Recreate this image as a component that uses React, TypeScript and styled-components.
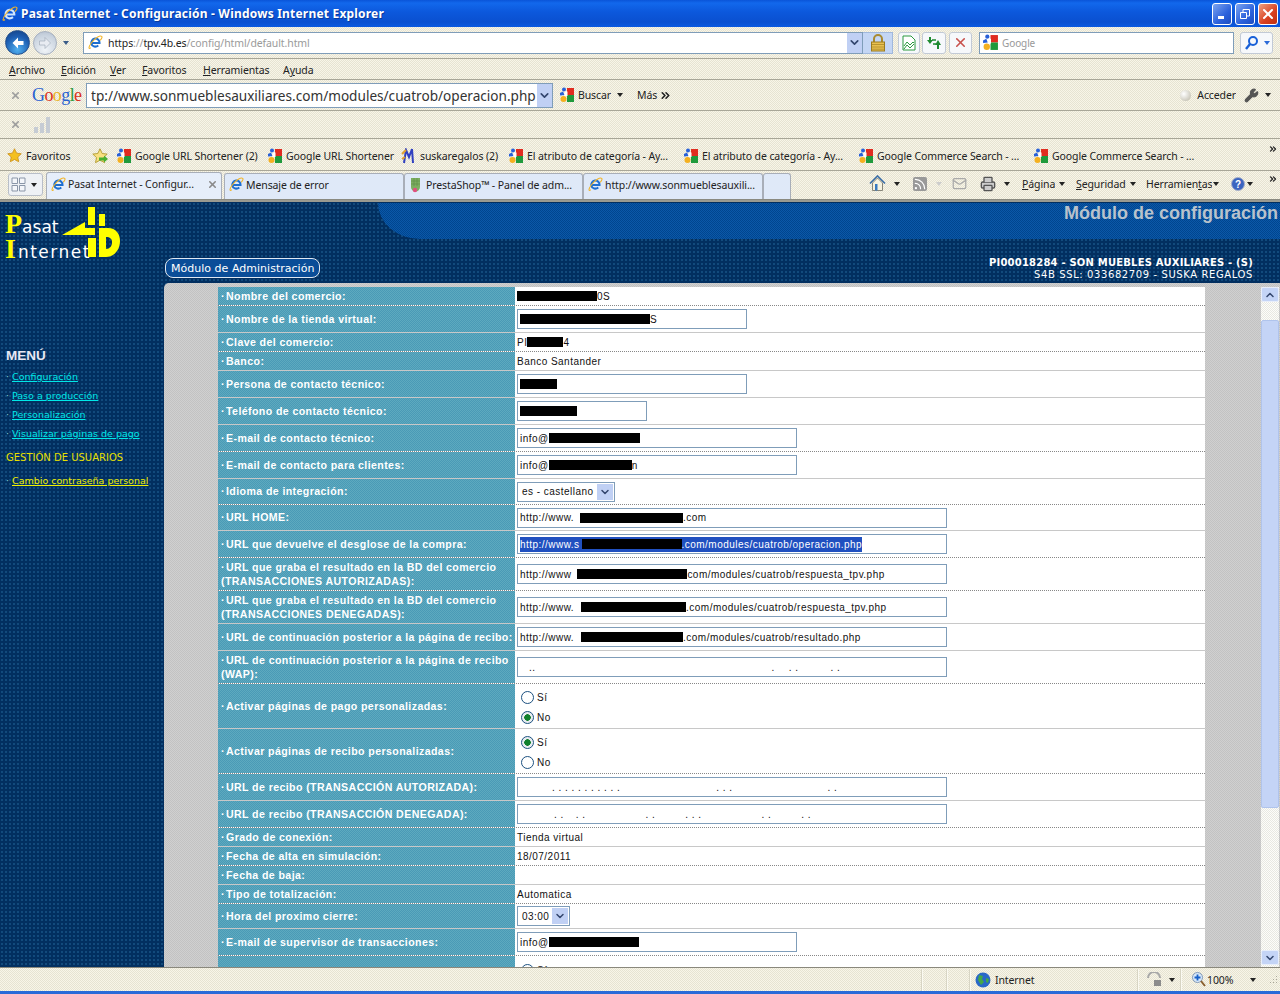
import React from "react";
import styled, { createGlobalStyle, css } from "styled-components";
import { ChevronDown, ChevronUp, ChevronsRight, Mail, Printer, Rss, Wrench, X } from "lucide-react";

const GlobalStyle = createGlobalStyle`
  html, body { margin: 0; padding: 0; background: #ece9d8; overflow: hidden; }
  * { box-sizing: border-box; }
`;

const checker = (a: string, b: string) => css`
  background-color: ${a};
  background-image: repeating-conic-gradient(${a} 0 25%, ${b} 0 50%);
  background-size: 2px 2px;
`;

const dots = (bg: string, dot: string) => css`
  background-color: ${bg};
  background-image: radial-gradient(${dot} 0.8px, transparent 1px);
  background-size: 4px 4px;
`;

const uiFont = `"Noto Sans", "Open Sans", sans-serif`;

const Window = styled.div`
  width: 1280px;
  height: 994px;
  display: flex;
  flex-direction: column;
  overflow: hidden;
  font-family: ${uiFont};
  font-size: 10.5px;
  letter-spacing: -0.1px;
  color: #222;
`;

/* ---- title bar ---- */
const TitleBar = styled.div`
  height: 27px;
  flex: none;
  display: flex;
  align-items: center;
  padding: 0 2px;
  background: linear-gradient(#0a54d8 0, #1268ec 3px, #0c58dc 12px, #0a50d0 22px, #0c5ae0 27px);
  color: #fff;
`;

const TitleText = styled.div`
  margin-left: 3px;
  font: bold 12px "Noto Sans", sans-serif;
  letter-spacing: 0.2px;
  flex: 1;
  text-shadow: 1px 1px 0 #083a9c;
`;

const WinButton = styled.div<{ $close?: boolean }>`
  width: 20px;
  height: 22px;
  margin-left: 3px;
  border: 1px solid #fff;
  border-radius: 3px;
  display: flex;
  align-items: center;
  justify-content: center;
  color: #fff;
  background: ${(p) =>
    p.$close
      ? "linear-gradient(135deg, #f0a080, #d84020 60%, #c03010)"
      : "linear-gradient(135deg, #7ca4f0, #2c62dc 60%, #1c4cc0)"};
`;

/* ---- generic bars ---- */
const Bar = styled.div<{ $h: number; $line?: boolean }>`
  height: ${(p) => p.$h}px;
  flex: none;
  display: flex;
  align-items: center;
  ${checker("#f8f5e8", "#e6e3d2")}
  border-bottom: ${(p) => (p.$line === false ? "none" : "1px solid #a8a698")};
`;

const FavBar = styled(Bar)`
  padding-top: 2px;
`;

const MenuBar = styled(Bar)`
  padding-top: 2px;
`;

const Spacer = styled.div`
  flex: 1;
`;

const Slot = styled.div<{ $w?: number; $ml?: number; $gap?: number }>`
  flex: none;
  display: flex;
  align-items: center;
  white-space: nowrap;
  overflow: hidden;
  ${(p) => p.$w !== undefined && `width: ${p.$w}px;`}
  margin-left: ${(p) => p.$ml ?? 0}px;
  gap: ${(p) => p.$gap ?? 3}px;
`;

const Ul = styled.span`
  text-decoration: underline;
`;

const Caret = styled.span<{ $ml?: number; $color?: string }>`
  flex: none;
  width: 0;
  height: 0;
  margin-left: ${(p) => p.$ml ?? 0}px;
  border: 3px solid transparent;
  border-top: 4px solid ${(p) => p.$color ?? "#222"};
  border-bottom: 0;
`;

const Dropper = styled.div<{ $w?: number; $h?: number }>`
  width: ${(p) => p.$w ?? 15}px;
  height: ${(p) => p.$h ?? 20}px;
  flex: none;
  display: flex;
  align-items: center;
  justify-content: center;
  color: #33466e;
  background: #c0d0f4;
`;

/* ---- address bar ---- */
const NavPill = styled.div`
  margin-left: 5px;
  width: 54px;
  height: 26px;
  display: flex;
  align-items: center;
`;

const RoundBtn = styled.div<{ $active?: boolean }>`
  width: ${(p) => (p.$active ? 25 : 24)}px;
  height: ${(p) => (p.$active ? 25 : 24)}px;
  border-radius: 50%;
  flex: none;
  margin-right: ${(p) => (p.$active ? 3 : 0)}px;
  display: flex;
  align-items: center;
  justify-content: center;
  border: 1px solid ${(p) => (p.$active ? "#24508c" : "#a6b0c0")};
  background: ${(p) =>
    p.$active
      ? "radial-gradient(circle at 50% 80%, #50b0f0, #1c5cb0 60%, #123e80)"
      : "radial-gradient(circle at 50% 80%, #f0f4f8, #c8d2de 70%, #b0bccc)"};
`;

const FieldBox = styled.div<{ $w: number; $h?: number; $ml?: number }>`
  width: ${(p) => p.$w}px;
  height: ${(p) => p.$h ?? 22}px;
  margin-left: ${(p) => p.$ml ?? 0}px;
  flex: none;
  display: flex;
  align-items: center;
  background: #fff;
  border: 1px solid #7f9db9;
  white-space: nowrap;
  overflow: hidden;
`;

const AddressText = styled.div`
  margin-left: 5px;
  flex: 1;
  font-size: 10.5px;
  color: #9a9a9a;
  & b {
    font-weight: 400;
    color: #222;
  }
`;

const LockBox = styled.div`
  width: 30px;
  height: 22px;
  flex: none;
  background: #c4d6f4;
  border: 1px solid #a0b8dc;
  border-left: none;
  display: flex;
  align-items: center;
  justify-content: center;
`;

const SquareBtn = styled.div<{ $w?: number; $ml?: number }>`
  width: ${(p) => p.$w ?? 23}px;
  height: 22px;
  flex: none;
  margin-left: ${(p) => p.$ml ?? 3}px;
  border: 1px solid #c2cad6;
  border-radius: 3px;
  background: #f6f8fb;
  display: flex;
  align-items: center;
  justify-content: center;
`;

const Placeholder = styled.span`
  margin-left: 3px;
  color: #999;
  font-size: 10px;
`;

/* ---- menu ---- */
const MenuItem = styled.span<{ $w: number; $ml?: number }>`
  flex: none;
  width: ${(p) => p.$w}px;
  margin-left: ${(p) => p.$ml ?? 0}px;
`;

/* ---- google bar ---- */
const CloseMark = styled.span<{ $ml?: number }>`
  margin-left: ${(p) => p.$ml ?? 10}px;
  flex: none;
  color: #9a9a9a;
  display: flex;
`;

const GoogleWord = styled.div`
  margin-left: 11px;
  width: 48px;
  flex: none;
  font: 18px "Liberation Serif", serif;
  letter-spacing: -0.6px;
`;

const GL = styled.span<{ $c: string }>`
  color: ${(p) => p.$c};
`;

const ComboText = styled.div`
  flex: 1;
  margin-left: 4px;
  font-size: 13.6px;
  letter-spacing: 0;
  color: #333;
  overflow: hidden;
`;

const Orb = styled.span`
  width: 11px;
  height: 11px;
  border-radius: 50%;
  background: radial-gradient(circle at 35% 35%, #fff, #b8b4a4);
  flex: none;
`;

const SmallBars = styled.div`
  margin-left: 13px;
  display: flex;
  align-items: flex-end;
  gap: 2px;
  height: 17px;
`;

const SmallBar = styled.span<{ $h: number }>`
  width: 4px;
  height: ${(p) => p.$h}px;
  background: #c6ccd4;
`;

/* ---- tabs ---- */
const TabRow = styled(Bar)`
  align-items: flex-end;
  border-bottom: 1px solid #8a8a80;
`;

const Tab = styled.div<{ $w: number; $active?: boolean; $ml?: number }>`
  flex: none;
  width: ${(p) => p.$w}px;
  height: ${(p) => (p.$active ? 27 : 26)}px;
  margin-left: ${(p) => p.$ml ?? 0}px;
  padding: 0 3px 4px 4px;
  display: flex;
  align-items: center;
  gap: 2px;
  white-space: nowrap;
  overflow: hidden;
  border: 1px solid #a8aeb8;
  border-bottom: none;
  border-radius: 3px 3px 0 0;
  background: ${(p) => (p.$active ? "#e6eefa" : "#dfe9f8")};
`;

const TabSwitch = styled.div`
  margin: 0 0 3px 8px;
  width: 35px;
  height: 23px;
  flex: none;
  border: 1px solid #b8bec8;
  border-radius: 3px;
  background: #eef1f5;
  display: flex;
  align-items: center;
  gap: 4px;
  padding-left: 2px;
`;

const TabTools = styled.div`
  flex: 1;
  height: 100%;
  display: flex;
  align-items: center;
  padding: 0 0 3px 0;
`;

/* ---- page ---- */
const Page = styled.div`
  flex: 1;
  min-height: 0;
  display: flex;
  flex-direction: column;
  letter-spacing: 0;
  border-top: 2px solid #9a9a90;
  ${dots("#022f60", "#124a7c")}
`;

const Header = styled.div`
  height: 81px;
  flex: none;
  display: flex;
`;

const Logo = styled.div`
  width: 164px;
  flex: none;
  display: flex;
  padding: 5px 0 0 5px;
`;

const LogoText = styled.div`
  width: 57px;
  padding-top: 7px;
  color: #fff;
  white-space: nowrap;
`;

const LogoLine = styled.div<{ $ls: number }>`
  font: 17px/24px "DejaVu Sans", sans-serif;
  letter-spacing: ${(p) => p.$ls}px;
`;

const LogoCap = styled.span<{ $mr: number }>`
  font-family: "Liberation Serif", serif;
  font-weight: bold;
  font-size: 28px;
  line-height: 20px;
  letter-spacing: 0;
  margin-right: ${(p) => p.$mr}px;
  color: #ffff00;
`;

const HeadRight = styled.div`
  flex: 1;
  display: flex;
  flex-direction: column;
`;

const Band = styled.div`
  height: 36px;
  margin: 1px 0 0 214px;
  padding-right: 2px;
  border-bottom-left-radius: 42px 36px;
  display: flex;
  justify-content: flex-end;
  ${checker("#00458f", "#0b58a8")}
  font: bold 18px "Liberation Sans", Arial, sans-serif;
  color: #b8c2cc;
`;

const InfoRow = styled.div`
  flex: 1;
  display: flex;
  justify-content: space-between;
  align-items: flex-end;
  padding: 0 27px 2px 1px;
`;

const ModuleBadge = styled.div`
  height: 20px;
  margin-bottom: 3px;
  padding: 0 5px;
  border: 1px solid #dfe8f2;
  border-radius: 8px;
  display: flex;
  align-items: center;
  background: #0a4d98;
  color: #fff;
  font: 11px "DejaVu Sans", sans-serif;
  letter-spacing: 0.02px;
`;

const Merchant = styled.div`
  text-align: right;
  color: #fff;
  font: 10px/12px "DejaVu Sans", sans-serif;
  letter-spacing: 0.6px;
  & b {
    display: block;
    font-size: 10px;
    letter-spacing: 0.2px;
  }
`;

const Lower = styled.div`
  flex: 1;
  min-height: 0;
  display: flex;
`;

const Sidebar = styled.div`
  width: 164px;
  flex: none;
  padding: 64px 0 0 6px;
  font: 9.5px "DejaVu Sans", sans-serif;
`;

const MenuTitle = styled.div`
  font: bold 13.5px/18px "Liberation Sans", sans-serif;
  color: #e8e8f4;
  margin-bottom: 2px;
`;

const SideLink = styled.a<{ $yellow?: boolean }>`
  display: block;
  height: 19px;
  line-height: 19px;
  white-space: nowrap;
  color: ${(p) => (p.$yellow ? "#f0f000" : "#00e8e8")};
  &::before {
    content: "· ";
    display: inline-block;
    width: 6px;
    text-decoration: none;
    color: #8fd0d0;
  }
  & span {
    text-decoration: underline;
  }
`;

const SideHead = styled.div`
  height: 27px;
  line-height: 27px;
  font-size: 10px;
  color: #e8e000;
  margin-top: 1px;
`;

const Content = styled.div`
  flex: 1;
  min-width: 0;
  display: flex;
  padding: 4px 1px 0 0;
  border-top-left-radius: 5px;
  overflow: hidden;
  ${checker("#c2c2c2", "#d0d0d0")}
`;

const FormTable = styled.div`
  margin-left: 54px;
  width: 987px;
  flex: none;
  display: flex;
  flex-direction: column;
  background: #fff;
`;

const Row = styled.div<{ $h: number; $dotted?: boolean }>`
  height: ${(p) => p.$h}px;
  flex: none;
  display: grid;
  grid-template-columns: 297px 1fr;
  border-bottom: 1px ${(p) => (p.$dotted ? "dotted #888" : "solid #c8c8c8")};
`;

const Label = styled.div`
  display: flex;
  align-items: center;
  padding: 1px 0 0 3px;
  ${checker("#4a9ab6", "#5eaabf")}
  color: #fff;
  font: bold 10.6px/13.5px "Liberation Sans", Arial, sans-serif;
  letter-spacing: 0.4px;
  & > span::before {
    content: "·";
    display: inline-block;
    width: 5px;
    letter-spacing: 0;
  }
`;

const Value = styled.div`
  display: flex;
  align-items: center;
  padding: 0 0 0 2px;
  font: 10px "Liberation Sans", Arial, sans-serif;
  letter-spacing: 0.47px;
  color: #111;
  white-space: nowrap;
`;

const Field = styled.div<{ $w: number }>`
  width: ${(p) => p.$w}px;
  height: 20px;
  padding: 0 2px;
  display: flex;
  align-items: center;
  border: 1px solid #7f9db9;
  background: #fff;
  overflow: hidden;
  white-space: nowrap;
`;

const Selected = styled.span`
  display: inline-flex;
  align-items: center;
  height: 15px;
  background: #2050c0;
  color: #fff;
`;

const Black = styled.span<{ $w: number }>`
  display: inline-block;
  flex: none;
  width: ${(p) => p.$w}px;
  height: 10px;
  background: #000;
`;

const Gap = styled.span<{ $w: number }>`
  flex: none;
  width: ${(p) => p.$w}px;
`;

const Select = styled.div`
  height: 20px;
  padding: 0 1px 0 4px;
  display: flex;
  align-items: center;
  gap: 3px;
  border: 1px solid #7f9db9;
  background: #fff;
`;

const RadioGroup = styled.div`
  display: flex;
  flex-direction: column;
  gap: 7px;
  padding: 3px 0 0 4px;
`;

const RadioRow = styled.div`
  display: flex;
  align-items: center;
  gap: 3px;
  height: 13px;
`;

const Radio = styled.span<{ $on?: boolean }>`
  width: 13px;
  height: 13px;
  flex: none;
  border-radius: 50%;
  border: 1px solid #1c5180;
  background: ${(p) =>
    p.$on ? "radial-gradient(circle, #10802c 0 3px, #e8ecf0 3.5px)" : "#fff"};
`;

const Scrollbar = styled.div`
  margin-left: 56px;
  width: 18px;
  flex: none;
  display: flex;
  flex-direction: column;
  padding-bottom: 2px;
  ${checker("#fdfdfa", "#e8e8e2")}
`;

const ScrollBtn = styled.div`
  height: 15px;
  flex: none;
  color: #33466e;
  background: #c4d4f6;
  border: 1px solid #e8eefa;
  border-radius: 2px;
  display: flex;
  align-items: center;
  justify-content: center;
`;

const ScrollThumb = styled.div`
  margin-top: 18px;
  height: 488px;
  flex: none;
  background: #c4d4f6;
  border: 1px solid #b0c4ec;
  border-radius: 2px;
`;

/* ---- status ---- */
const Status = styled(Bar)`
  border-top: 1px solid #8a887c;
  border-bottom: none;
`;

const Sep = styled.span<{ $ml: number }>`
  flex: none;
  width: 2px;
  height: 22px;
  margin-left: ${(p) => p.$ml}px;
  background: #fbfaf2;
  border-left: 1px solid #d8d5c4;
`;

const BottomEdge = styled.div`
  height: 3px;
  flex: none;
  background: #2a6ad8;
`;

/* ---- drawn icons ---- */
const IeIcon = ({ size = 15, light }: { size?: number; light?: boolean }) => (
  <svg width={size} height={size} viewBox="0 0 16 16" style={{ flex: "none" }}>
    <path d="M4 8.500h8.300A4.400 4.400 0 103.700 9.500c.7 2.900 4.600 3.800 7.300 1.700" fill="none" stroke={light ? "#cfe4ff" : "#1e6fd0"} strokeWidth="2.200" />
    <path d="M3 13.500C.6 15.600 0 13.500 3.500 8.500 7.500 3 13 .2 14.600 1.400c1 .8-.2 2.800-1.600 4.300" fill="none" stroke="#f0b428" strokeWidth="1.100" />
  </svg>
);

const GoogleTile = ({ size = 16 }: { size?: number }) => (
  <svg width={size} height={size} viewBox="0 0 16 16" style={{ flex: "none" }}>
    <rect x="8" y="1" width="7" height="7" fill="#e02c20" />
    <rect x="8" y="8" width="7" height="7" fill="#1f9a3c" />
    <circle cx="4.500" cy="12" r="3" fill="#f4b020" />
    <circle cx="5" cy="2.500" r="2" fill="#2860d8" />
    <path d="M1 6l3-1.500L5.500 8 1 8.500z" fill="#2860d8" />
    <path d="M5.500 4.500h3V9h-3z" fill="#fff" />
  </svg>
);

const StarIcon = () => (
  <svg width={15} height={15} viewBox="0 0 16 16" style={{ flex: "none" }}>
    <path d="M8 .8l2.200 4.700 5 .6-3.700 3.500 1 5.100L8 12.200l-4.500 2.500 1-5.100L.8 6.100l5-.6z" fill="#f4c020" stroke="#c88a10" strokeWidth=".8" />
  </svg>
);

const StarAddIcon = () => (
  <svg width={17} height={16} viewBox="0 0 17 16" style={{ flex: "none" }}>
    <path d="M8 .8l2.200 4.700 5 .6-3.700 3.500 1 5.100L8 12.200l-4.500 2.500 1-5.100L.8 6.100l5-.6z" fill="#f8e080" stroke="#a89020" strokeWidth=".8" />
    <path d="M7 9.500h5V7.500l4 3.500-4 3.500v-2H7z" fill="#48b030" />
  </svg>
);

const BackArrow = ({ color }: { color: string }) => (
  <svg width={14} height={14} viewBox="0 0 14 14">
    <path d="M7 1.500L1.500 7 7 12.500V9h5.500V5H7z" fill={color} />
  </svg>
);

const PadLock = () => (
  <svg width={16} height={18} viewBox="0 0 16 18">
    <path d="M4 8V5a4 4 0 018 0v3" fill="none" stroke="#a88a30" strokeWidth="2" />
    <rect x="1.500" y="8" width="13" height="9" fill="#e8c050" stroke="#9a7a20" />
    <path d="M2 10.500h12M2 13h12M2 15.200h12" stroke="#b89430" />
  </svg>
);

const CompatIcon = () => (
  <svg width={14} height={16} viewBox="0 0 14 16">
    <path d="M1 1h8l4 4v10H1z" fill="#fff" stroke="#2c9a40" />
    <path d="M2 11l3-4 3 3 3-3 1 1M2 14l3-4 3 3 4-4" fill="none" stroke="#2c9a40" />
  </svg>
);

const RefreshIcon = () => (
  <svg width={16} height={15} viewBox="0 0 16 15">
    <path d="M1 5l3-4 3 4H5v3H3V5z" fill="#1e8a30" transform="rotate(180 4 5)" />
    <path d="M9 10l3-5 3 5h-2v4h-2v-4z" fill="#1e8a30" />
    <path d="M6 5h4M7 9h3" stroke="#1e8a30" strokeWidth="1.500" />
  </svg>
);

const SearchIcon = () => (
  <svg width={15} height={16} viewBox="0 0 15 16">
    <circle cx="9" cy="6" r="4" fill="none" stroke="#1860d8" strokeWidth="2" />
    <path d="M6 9l-4 5" stroke="#1860d8" strokeWidth="2.400" />
  </svg>
);

const HomeIcon = () => (
  <svg width={17} height={17} viewBox="0 0 17 17">
    <path d="M1 8.500L8.500 1 16 8.500" fill="none" stroke="#3a6ea8" strokeWidth="1.600" />
    <path d="M3.500 8L8.500 3l5 5v7.500h-10z" fill="#f6f2e0" stroke="#6a6a60" strokeWidth=".8" />
    <rect x="6" y="9" width="2.500" height="6.500" fill="#3a7ac0" />
  </svg>
);

const HelpIcon = () => (
  <svg width={14} height={14} viewBox="0 0 14 14">
    <circle cx="7" cy="7" r="6.500" fill="#3a64c0" stroke="#a8b0c8" />
    <text x="7" y="11" textAnchor="middle" fontSize="10" fontWeight="bold" fill="#fff" fontFamily="Liberation Sans, sans-serif">?</text>
  </svg>
);

const PrestaIcon = () => (
  <svg width={13} height={16} viewBox="0 0 13 16" style={{ flex: "none" }}>
    <path d="M2 1h9v9a4.500 4.500 0 01-9 0z" fill="#7cae60" />
    <path d="M2 4h9M2 7h9M5 1v8M8 1v8" stroke="#5a8a48" strokeWidth=".6" />
    <circle cx="6" cy="13" r="2.200" fill="#e05080" />
  </svg>
);

const SusIcon = () => (
  <svg width={16} height={16} viewBox="0 0 16 16" style={{ flex: "none" }}>
    <path d="M3 15L5 2l3 7 3-8 1 14" fill="none" stroke="#3040c0" strokeWidth="2" />
    <path d="M1 6l4-4M1 11l3-2" stroke="#e0a030" strokeWidth="2" />
  </svg>
);

const GlobeIcon = () => (
  <svg width={16} height={16} viewBox="0 0 16 16">
    <circle cx="8" cy="8" r="7.500" fill="#2a68c8" />
    <path d="M4 3l4 1-1 3 2 3-3 3-3-5zM11 6l3 1-1 4-2-1z" fill="#44a848" />
  </svg>
);

const ShieldLock = () => (
  <svg width={15} height={15} viewBox="0 0 15 15">
    <path d="M1 6a6 6 0 0112 0" fill="none" stroke="#a8a8a8" strokeWidth="2" />
    <rect x="7" y="8" width="7" height="6" fill="#8c8c8c" />
  </svg>
);

const ZoomIcon = () => (
  <svg width={14} height={15} viewBox="0 0 14 15">
    <circle cx="5.500" cy="5.500" r="5" fill="#d8e8f8" stroke="#8098b8" />
    <path d="M5.500 2.500v6M2.500 5.500h6" stroke="#1860c8" strokeWidth="1.800" />
    <path d="M9 9l4 5" stroke="#8a6030" strokeWidth="2" />
  </svg>
);

const Grip = () => (
  <svg width={10} height={10} viewBox="0 0 10 10">
    <path d="M8 1h1v1H8zM5 4h1v1H5zM8 4h1v1H8zM2 7h1v1H2zM5 7h1v1H5zM8 7h1v1H8z" fill="#a8a698" />
  </svg>
);

const PasatMark = () => (
  <svg width={60} height={52} viewBox="0 0 60 52" style={{ flex: "none", overflow: "visible" }}>
    <path d="M0 28L23 15v6h10v7z" fill="#ffff00" />
    <rect x="26" y="0" width="7" height="18" fill="#ffff00" />
    <rect x="37" y="7" width="6" height="12" fill="#ffff00" />
    <rect x="26" y="31" width="8" height="19" fill="#ffff00" />
    <path d="M37 21h9c8 0 12 6 12 13 0 9-6 16-14 16h-7zM44 30v12c4 0 6-3 6-7 0-3-2-5-6-5z" fill="#ffff00" fillRule="evenodd" />
  </svg>
);

/* ---- data ---- */
// numbers in parts: positive = redaction bar of that width, negative = blank gap
type Part = string | number;
type Cell =
  | { kind: "text"; parts: Part[] }
  | { kind: "field"; w: number; parts: Part[]; selected?: boolean }
  | { kind: "select"; text: string }
  | { kind: "radio"; on: "si" | "no" }
  | { kind: "empty" };

type FormRow = { label: string; h: number; dotted?: boolean; cell: Cell };

const rows: FormRow[] = [
  { label: "Nombre del comercio:", h: 19, dotted: true, cell: { kind: "text", parts: [80, "0S"] } },
  { label: "Nombre de la tienda virtual:", h: 27, cell: { kind: "field", w: 230, parts: [130, "S"] } },
  { label: "Clave del comercio:", h: 19, dotted: true, cell: { kind: "text", parts: ["PI", 36, "4"] } },
  { label: "Banco:", h: 19, cell: { kind: "text", parts: ["Banco Santander"] } },
  { label: "Persona de contacto técnico:", h: 27, cell: { kind: "field", w: 230, parts: [37] } },
  { label: "Teléfono de contacto técnico:", h: 27, cell: { kind: "field", w: 130, parts: [57] } },
  { label: "E-mail de contacto técnico:", h: 27, dotted: true, cell: { kind: "field", w: 280, parts: ["info@", 91] } },
  { label: "E-mail de contacto para clientes:", h: 27, cell: { kind: "field", w: 280, parts: ["info@", 83, "n"] } },
  { label: "Idioma de integración:", h: 26, dotted: true, cell: { kind: "select", text: "es - castellano" } },
  { label: "URL HOME:", h: 26, cell: { kind: "field", w: 430, parts: ["http://www.", -6, 103, ".com"] } },
  { label: "URL que devuelve el desglose de la compra:", h: 27, dotted: true, cell: { kind: "field", w: 430, selected: true, parts: ["http://www.s", -2, 100, ".com/modules/cuatrob/operacion.php"] } },
  { label: "URL que graba el resultado en la BD del comercio (TRANSACCIONES AUTORIZADAS):", h: 33, dotted: true, cell: { kind: "field", w: 430, parts: ["http://www", -6, 110, "com/modules/cuatrob/respuesta_tpv.php"] } },
  { label: "URL que graba el resultado en la BD del comercio (TRANSACCIONES DENEGADAS):", h: 33, cell: { kind: "field", w: 430, parts: ["http://www.", -7, 105, ".com/modules/cuatrob/respuesta_tpv.php"] } },
  { label: "URL de continuación posterior a la página de recibo:", h: 27, cell: { kind: "field", w: 430, parts: ["http://www.", -7, 102, ".com/modules/cuatrob/resultado.php"] } },
  { label: "URL de continuación posterior a la página de recibo (WAP):", h: 33, dotted: true, cell: { kind: "field", w: 430, parts: [-9, "..", -236, ".", -14, ". .", -32, ". ."] } },
  { label: "Activar páginas de pago personalizadas:", h: 45, cell: { kind: "radio", on: "no" } },
  { label: "Activar páginas de recibo personalizadas:", h: 45, dotted: true, cell: { kind: "radio", on: "si" } },
  { label: "URL de recibo (TRANSACCIÓN AUTORIZADA):", h: 27, cell: { kind: "field", w: 430, parts: [-32, ". . . . . . . . . . .", -96, ". . .", -95, ". ."] } },
  { label: "URL de recibo (TRANSACCIÓN DENEGADA):", h: 27, dotted: true, cell: { kind: "field", w: 430, parts: [-34, ". .", -12, ". .", -60, ". .", -30, ". . .", -60, ". .", -30, ". ."] } },
  { label: "Grado de conexión:", h: 19, cell: { kind: "text", parts: ["Tienda virtual"] } },
  { label: "Fecha de alta en simulación:", h: 19, dotted: true, cell: { kind: "text", parts: ["18/07/2011"] } },
  { label: "Fecha de baja:", h: 19, cell: { kind: "empty" } },
  { label: "Tipo de totalización:", h: 19, dotted: true, cell: { kind: "text", parts: ["Automatica"] } },
  { label: "Hora del proximo cierre:", h: 25, cell: { kind: "select", text: "03:00" } },
  { label: "E-mail de supervisor de transacciones:", h: 27, dotted: true, cell: { kind: "field", w: 280, parts: ["info@", 90] } },
  { label: "", h: 47, cell: { kind: "radio", on: "no" } },
];

const renderParts = (parts: Part[]) =>
  parts.map((p, i) => {
    if (typeof p === "string") return <span key={i}>{p}</span>;
    return p > 0 ? <Black key={i} $w={p} /> : <Gap key={i} $w={-p} />;
  });

const renderCell = (cell: Cell) => {
  switch (cell.kind) {
    case "text":
      return renderParts(cell.parts);
    case "field":
      return (
        <Field $w={cell.w}>
          {cell.selected ? <Selected>{renderParts(cell.parts)}</Selected> : renderParts(cell.parts)}
        </Field>
      );
    case "select":
      return (
        <Select>
          {cell.text}
          <Dropper $w={16} $h={16}>
            <ChevronDown size={12} strokeWidth={3} />
          </Dropper>
        </Select>
      );
    case "radio":
      return (
        <RadioGroup>
          <RadioRow>
            <Radio $on={cell.on === "si"} />
            Sí
          </RadioRow>
          <RadioRow>
            <Radio $on={cell.on === "no"} />
            No
          </RadioRow>
        </RadioGroup>
      );
    default:
      return null;
  }
};

const bookmarks = [
  { w: 151, text: "Google URL Shortener (2)" },
  { w: 134, text: "Google URL Shortener" },
  { w: 107, text: "suskaregalos (2)", custom: true },
  { w: 175, text: "El atributo de categoría - Ay..." },
  { w: 175, text: "El atributo de categoría - Ay..." },
  { w: 175, text: "Google Commerce Search - ..." },
  { w: 175, text: "Google Commerce Search - ..." },
];

export default function App() {
  return (
    <Window>
      <GlobalStyle />
      <TitleBar>
        <IeIcon size={16} light />
        <TitleText>Pasat Internet - Configuración - Windows Internet Explorer</TitleText>
        <WinButton>
          <svg width={10} height={12} viewBox="0 0 10 12"><rect x="1" y="8" width="6" height="3" fill="#fff" /></svg>
        </WinButton>
        <WinButton>
          <svg width={12} height={12} viewBox="0 0 12 12"><path d="M1.500 4.500h6v6h-6zM4 4V1.500h6.500V8H8" fill="none" stroke="#fff" /></svg>
        </WinButton>
        <WinButton $close>
          <X size={16} strokeWidth={3} />
        </WinButton>
      </TitleBar>

      <Bar $h={32}>
        <NavPill>
          <RoundBtn $active><BackArrow color="#fff" /></RoundBtn>
          <RoundBtn><svg width={14} height={14} viewBox="0 0 14 14"><path d="M7 1.500L12.500 7 7 12.500V9H1.500V5H7z" fill="#e8ecf2" stroke="#98a4b4" strokeWidth=".6" /></svg></RoundBtn>
        </NavPill>
        <Caret $ml={4} $color="#3a5c88" />
        <FieldBox $w={780} $ml={14}>
          <Slot $ml={4} $gap={0}><IeIcon size={15} /></Slot>
          <AddressText><b>https</b>://<b>tpv.4b.es</b>/config/html/default.html</AddressText>
          <Dropper $h={20}><ChevronDown size={13} strokeWidth={3} /></Dropper>
        </FieldBox>
        <LockBox><PadLock /></LockBox>
        <SquareBtn $w={22} $ml={5}><CompatIcon /></SquareBtn>
        <SquareBtn $w={24} $ml={2}><RefreshIcon /></SquareBtn>
        <SquareBtn $w={23} $ml={3}><X size={15} color="#c8504c" strokeWidth={2.500} /></SquareBtn>
        <FieldBox $w={255} $ml={7}>
          <Slot $ml={2} $gap={0}><GoogleTile size={17} /></Slot>
          <Placeholder>Google</Placeholder>
        </FieldBox>
        <SquareBtn $w={33} $ml={6}>
          <SearchIcon />
          <Caret $ml={5} $color="#2a6ad8" />
        </SquareBtn>
      </Bar>

      <MenuBar $h={21}>
        <MenuItem $w={52} $ml={9}><Ul>A</Ul>rchivo</MenuItem>
        <MenuItem $w={49}><Ul>E</Ul>dición</MenuItem>
        <MenuItem $w={32}><Ul>V</Ul>er</MenuItem>
        <MenuItem $w={61}><Ul>F</Ul>avoritos</MenuItem>
        <MenuItem $w={80}><Ul>H</Ul>erramientas</MenuItem>
        <MenuItem $w={40}>A<Ul>y</Ul>uda</MenuItem>
      </MenuBar>

      <Bar $h={31}>
        <CloseMark><X size={11} strokeWidth={3.500} /></CloseMark>
        <GoogleWord>
          <GL $c="#2a62d0">G</GL><GL $c="#d83020">o</GL><GL $c="#e8b020">o</GL><GL $c="#2a62d0">g</GL><GL $c="#2c9a40">l</GL><GL $c="#d83020">e</GL>
        </GoogleWord>
        <FieldBox $w={467} $h={25} $ml={6}>
          <ComboText>tp://www.sonmueblesauxiliares.com/modules/cuatrob/operacion.php</ComboText>
          <Dropper $h={23}><ChevronDown size={13} strokeWidth={3} /></Dropper>
        </FieldBox>
        <Slot $ml={6}><GoogleTile /></Slot>
        <Slot $ml={3}>Buscar</Slot>
        <Caret $ml={6} />
        <Slot $ml={14} $gap={2}>Más <ChevronsRight size={13} strokeWidth={3} /></Slot>
        <Spacer />
        <Orb />
        <Slot $ml={6}>Acceder</Slot>
        <Slot $ml={8}><Wrench size={15} fill="#555" color="#555" /></Slot>
        <Caret $ml={6} />
        <Slot $w={9} />
      </Bar>

      <Bar $h={28}>
        <CloseMark><X size={11} strokeWidth={3.500} /></CloseMark>
        <SmallBars>
          <SmallBar $h={6} />
          <SmallBar $h={10} />
          <SmallBar $h={16} />
        </SmallBars>
      </Bar>

      <FavBar $h={32}>
        <Slot $ml={7} $gap={4} $w={85}><StarIcon />Favoritos</Slot>
        <StarAddIcon />
        <Slot $w={7} />
        {bookmarks.map((b, i) => (
          <Slot key={i} $w={b.w} $gap={3}>
            {b.custom ? <SusIcon /> : <GoogleTile />}
            {b.text}
          </Slot>
        ))}
        <Spacer />
        <ChevronsRight size={10} strokeWidth={3} style={{ marginRight: 2, marginBottom: 14 }} />
      </FavBar>

      <TabRow $h={29}>
        <TabSwitch>
          <svg width={15} height={15} viewBox="0 0 15 15">
            <path d="M1 1h5.500v5.500H1zM8.500 1H14v5.500H8.500zM1 8.500h5.500V14H1zM8.500 8.500H14V14H8.500z" fill="#f4f6fa" stroke="#8a96a8" />
          </svg>
          <Caret $ml={1} />
        </TabSwitch>
        <Tab $w={176} $active $ml={3}>
          <IeIcon size={15} />
          Pasat Internet - Configur...
          <Spacer />
          <X size={11} strokeWidth={3.500} color="#8a8a8a" />
        </Tab>
        <Tab $w={180} $ml={2}><IeIcon size={15} />Mensaje de error</Tab>
        <Tab $w={179}><PrestaIcon /><Slot $ml={2}>PrestaShop™ - Panel de adm...</Slot></Tab>
        <Tab $w={180}><IeIcon size={15} />http://www.sonmueblesauxili...</Tab>
        <Tab $w={28} />
        <TabTools>
          <Slot $ml={78}><HomeIcon /></Slot>
          <Caret $ml={8} />
          <Slot $ml={13}><Rss size={14} color="#fff" fill="#999" style={{ background: "#999", borderRadius: 2 }} /></Slot>
          <Caret $ml={9} $color="#ccc" />
          <Slot $ml={10}><Mail size={15} color="#aaa" /></Slot>
          <Slot $ml={13}><Printer size={16} color="#555" fill="#ccc" /></Slot>
          <Caret $ml={8} />
          <Slot $ml={12} $w={33}><span><Ul>P</Ul>ágina</span></Slot>
          <Caret $ml={4} />
          <Slot $ml={11} $w={50}><span><Ul>S</Ul>eguridad</span></Slot>
          <Caret $ml={4} />
          <Slot $ml={10} $w={66}><span>Herramien<Ul>t</Ul>as</span></Slot>
          <Caret $ml={1} />
          <Slot $ml={12}><HelpIcon /></Slot>
          <Caret $ml={2} />
          <Spacer />
          <ChevronsRight size={10} strokeWidth={3} style={{ marginRight: 2, marginBottom: 10 }} />
        </TabTools>
      </TabRow>

      <Page>
        <Header>
          <Logo>
            <LogoText>
              <LogoLine $ls={0}><LogoCap $mr={0}>P</LogoCap>asat</LogoLine>
              <LogoLine $ls={1.500}><LogoCap $mr={2}>I</LogoCap>nternet</LogoLine>
            </LogoText>
            <PasatMark />
          </Logo>
          <HeadRight>
            <Band>Módulo de configuración</Band>
            <InfoRow>
              <ModuleBadge>Módulo de Administración</ModuleBadge>
              <Merchant>
                <b>PI00018284 - SON MUEBLES AUXILIARES - (S)</b>
                S4B SSL: 033682709 - SUSKA REGALOS
              </Merchant>
            </InfoRow>
          </HeadRight>
        </Header>
        <Lower>
          <Sidebar>
            <MenuTitle>MENÚ</MenuTitle>
            <SideLink><span>Configuración</span></SideLink>
            <SideLink><span>Paso a producción</span></SideLink>
            <SideLink><span>Personalización</span></SideLink>
            <SideLink><span>Visualizar páginas de pago</span></SideLink>
            <SideHead>GESTIÓN DE USUARIOS</SideHead>
            <SideLink $yellow><span>Cambio contraseña personal</span></SideLink>
          </Sidebar>
          <Content>
            <FormTable>
              {rows.map((r, i) => (
                <Row key={i} $h={r.h} $dotted={r.dotted}>
                  <Label>{r.label && <span>{r.label}</span>}</Label>
                  <Value>{renderCell(r.cell)}</Value>
                </Row>
              ))}
            </FormTable>
            <Scrollbar>
              <ScrollBtn><ChevronUp size={12} strokeWidth={3} /></ScrollBtn>
              <ScrollThumb />
              <Spacer />
              <ScrollBtn><ChevronDown size={12} strokeWidth={3} /></ScrollBtn>
            </Scrollbar>
          </Content>
        </Lower>
      </Page>

      <Status $h={24} $line={false}>
        <Sep $ml={921} />
        <Sep $ml={23} />
        <Sep $ml={21} />
        <Slot $ml={4} $gap={4} $w={162}><GlobeIcon />Internet</Slot>
        <Sep $ml={0} />
        <Slot $ml={8}><ShieldLock /></Slot>
        <Caret $ml={7} />
        <Sep $ml={5} />
        <Slot $ml={10} $gap={1} $w={54}><ZoomIcon />100%</Slot>
        <Caret $ml={4} />
        <Spacer />
        <Grip />
        <Slot $w={2} />
      </Status>
      <BottomEdge />
    </Window>
  );
}
